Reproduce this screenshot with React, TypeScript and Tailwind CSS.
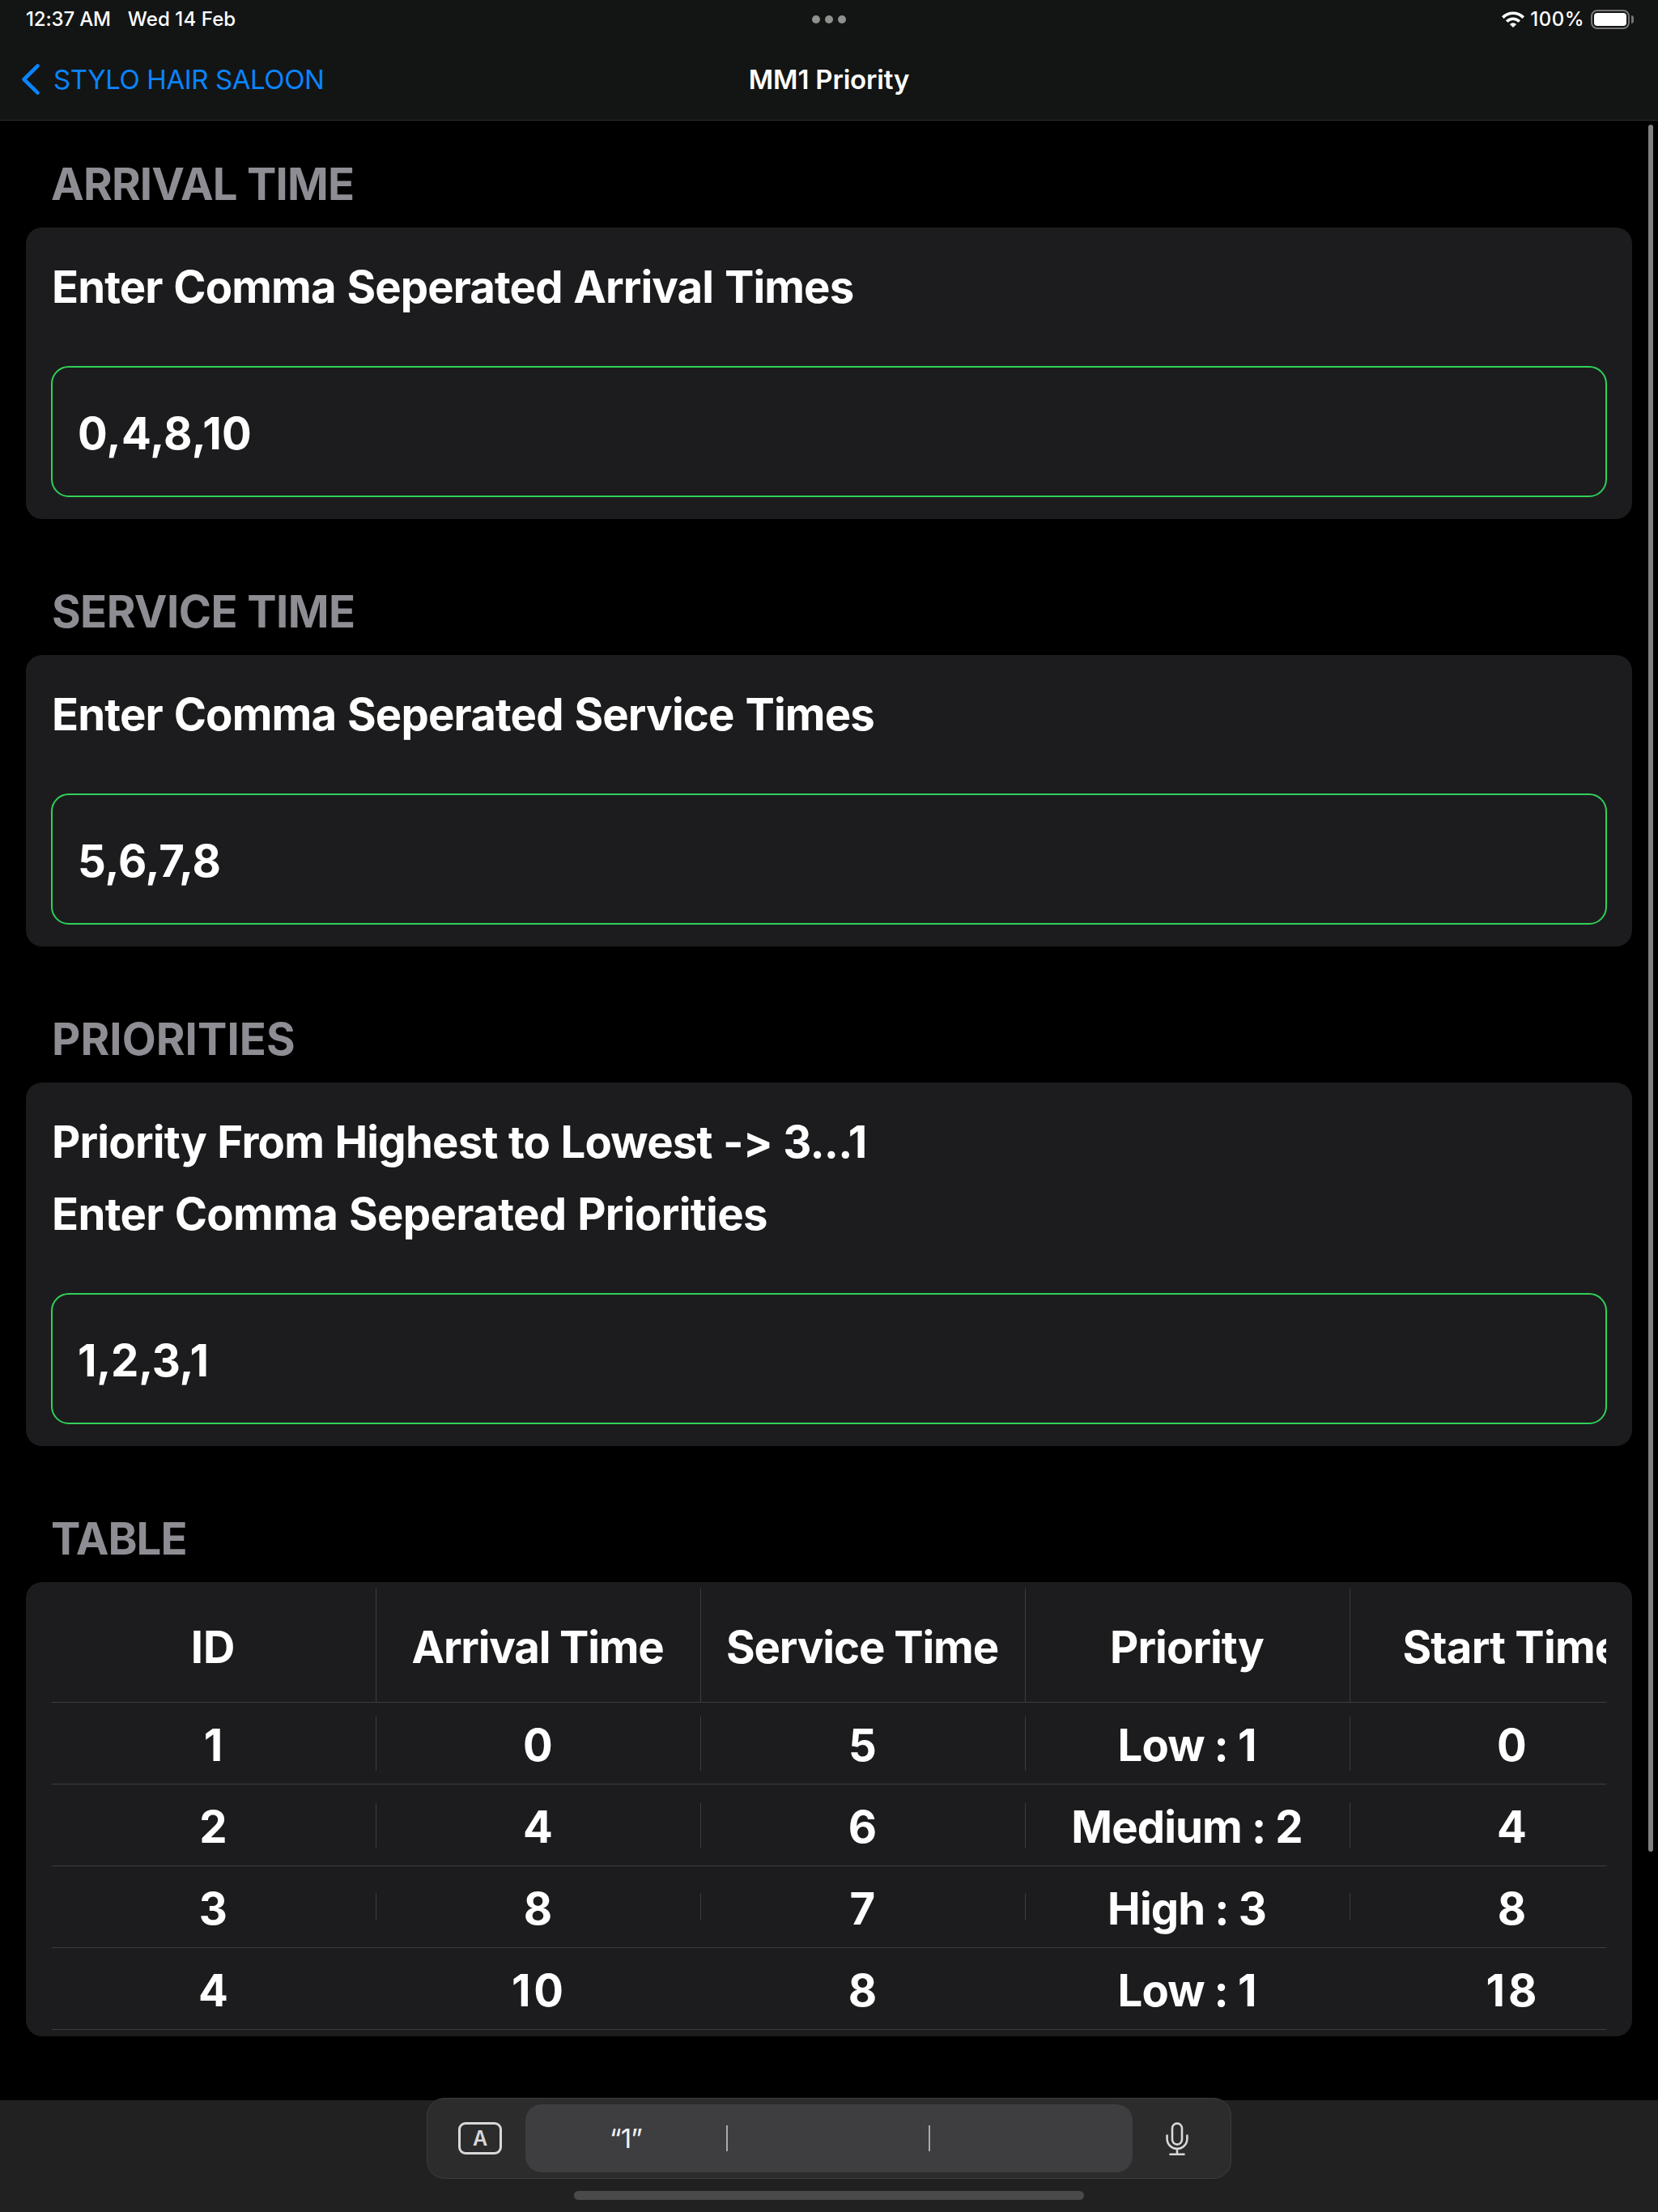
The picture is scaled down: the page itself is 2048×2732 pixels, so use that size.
import React from "react";

type Line = { text: string; className: string };
type Field = { title: string; titleClass: string; lines: Line[]; value: string; valueClass: string };

const fields: Field[] = [
  {
    title: "ARRIVAL TIME",
    titleClass: "tracking-[-0.8px] -ml-px",
    lines: [{ text: "Enter Comma Seperated Arrival Times", className: "tracking-[-0.9px] [word-spacing:1.7px]" }],
    value: "0,4,8,10",
    valueClass: "tracking-[0.27px]",
  },
  {
    title: "SERVICE TIME",
    titleClass: "tracking-[-0.57px]",
    lines: [{ text: "Enter Comma Seperated Service Times", className: "tracking-[-0.85px] [word-spacing:1.7px]" }],
    value: "5,6,7,8",
    valueClass: "tracking-[-0.15px]",
  },
  {
    title: "PRIORITIES",
    titleClass: "tracking-[0.08px]",
    lines: [
      { text: "Priority From Highest to Lowest -> 3...1", className: "tracking-[-0.8px] [word-spacing:1.2px]" },
      { text: "Enter Comma Seperated Priorities", className: "tracking-[-0.65px] [word-spacing:1.5px]" },
    ],
    value: "1,2,3,1",
    valueClass: "tracking-[-0.3px]",
  },
];

const columns = [
  { text: "ID", className: "tracking-normal" },
  { text: "Arrival Time", className: "tracking-[-1.2px]" },
  { text: "Service Time", className: "tracking-[-1.1px]" },
  { text: "Priority", className: "tracking-[-0.95px]" },
  { text: "Start Time", className: "tracking-[-0.8px]" },
];

const rows = [
  { cells: ["1", "0", "5", "Low : 1", "0"], bar: "h-[67px]" },
  { cells: ["2", "4", "6", "Medium : 2", "4"], bar: "h-[55px]" },
  { cells: ["3", "8", "7", "High : 3", "8"], bar: "h-[34px]" },
  { cells: ["4", "10", "8", "Low : 1", "18"], bar: "h-0" },
];

function StatusBar() {
  return (
    <div className="grid h-12 grid-cols-3 items-center pl-8 pr-[30px] text-[24px] font-medium leading-none">
      <div className="flex gap-[21px] whitespace-nowrap">
        <span className="tracking-[-0.17px]">12:37 AM</span>
        <span className="tracking-[0.1px]">Wed 14 Feb</span>
      </div>
      <div className="flex justify-center gap-1.5 pr-0.5">
        <i className="size-2.5 rounded-full bg-[#8f918f]" />
        <i className="size-2.5 rounded-full bg-[#8f918f]" />
        <i className="size-2.5 rounded-full bg-[#8f918f]" />
      </div>
      <div className="flex items-center justify-end">
        <svg width="28" height="20" viewBox="0 0 28 20" fill="none" stroke="#fff" strokeWidth="3.7">
          <path d="M1.3 7.6A17.8 17.8 0 0 1 26.7 7.6" />
          <path d="M6.2 12.5A11 11 0 0 1 21.8 12.5" />
          <path d="M9.9 16A5.8 5.8 0 0 1 18.1 16L14 20Z" fill="#fff" stroke="none" />
        </svg>
        <span className="ml-[7px] tracking-[0.5px]">100%</span>
        <div className="ml-2 h-6 w-12 rounded-[8px] border-2 border-[#757675] p-0.5">
          <div className="h-full rounded-[4px] bg-white" />
        </div>
        <i className="ml-0.5 h-2.5 w-[3px] rounded-r-full bg-[#757675]" />
      </div>
    </div>
  );
}

function NavBar() {
  return (
    <div className="grid h-[100px] grid-cols-3 items-center text-[33px] leading-none">
      <div className="flex items-center whitespace-nowrap pl-[27px] text-[#0a84ff]">
        <svg width="22" height="38" viewBox="0 0 22 38" fill="none" stroke="currentColor" strokeWidth="4.6" strokeLinecap="round" strokeLinejoin="round">
          <path d="M19.5 2.4L2.6 19L19.5 35.6" />
        </svg>
        <span className="ml-[17px] tracking-[-0.41px]">STYLO HAIR SALOON</span>
      </div>
      <div className="text-center font-semibold tracking-[-0.18px]">MM1 Priority</div>
    </div>
  );
}

function SectionTitle({ text, className }: { text: string; className: string }) {
  return (
    <h2 className="h-[66px] pl-8 text-[54.5px] font-bold leading-[66px] text-[#8e8d93]">
      <span className={className}>{text}</span>
    </h2>
  );
}

function FieldSection({ field, first }: { field: Field; first: boolean }) {
  return (
    <section className={first ? "pt-[45px]" : "pt-[81px]"}>
      <SectionTitle text={field.title} className={field.titleClass} />
      <div className="mt-[21px] rounded-[20px] bg-[#1c1c1e] px-[31px] pb-[27px] pt-10">
        <div className="mb-[65px] flex flex-col gap-[23px] pl-px text-[54.5px] font-bold leading-[66px]">
          {field.lines.map((line) => (
            <p key={line.text} className={line.className}>
              {line.text}
            </p>
          ))}
        </div>
        <div className="flex h-[162px] items-center rounded-[22px] border-2 border-[#30d158] pl-[31px] pt-1 text-[54.5px] font-bold leading-none">
          <span className={field.valueClass}>{field.value}</span>
        </div>
      </div>
    </section>
  );
}

function Cell({ text, bar, className = "" }: { text: string; bar: string; className?: string }) {
  return (
    <div className={`flex w-[401px] shrink-0 items-center ${className}`}>
      <span className="grow whitespace-nowrap pr-0.5 pt-1 text-center leading-none">
        {/^\d\d$/.test(text) ? <span className="pl-1 tracking-[4px]">{text}</span> : text}
      </span>
      <i className={`w-px bg-[#3d3d41] ${bar}`} />
    </div>
  );
}

function ResultTable() {
  return (
    <section className="pt-[81px]">
      <SectionTitle text="TABLE" className="-ml-px tracking-[-0.9px]" />
      <div className="mt-[21px] rounded-[20px] bg-[#1c1c1e] px-8 py-2">
        <div className="overflow-hidden text-[54.5px] font-bold">
          <div className="flex h-[141px] border-b border-[#3d3d41]">
            {columns.map((c) => (
              <Cell key={c.text} text={c.text} className={c.className} bar="h-full" />
            ))}
          </div>
          {rows.map((r) => (
            <div key={r.cells[0]} className="flex h-[101px] border-b border-[#3d3d41] tracking-[-0.9px]">
              {r.cells.map((c, i) => (
                <Cell key={i} text={c} bar={r.bar} />
              ))}
            </div>
          ))}
        </div>
      </div>
    </section>
  );
}

function KeyboardBar() {
  return (
    <footer className="mt-auto flex h-[138px] flex-col items-center bg-[#212121]">
      <div className="-mt-[3px] flex h-[100px] w-[994px] shrink-0 items-center rounded-[22px] border border-[#3c3c3c] bg-[#2c2c2c]">
        <div className="flex w-[121px] justify-center pl-[9px]">
          <span className="flex h-10 w-[54px] items-center justify-center rounded-[9px] border-[3px] border-[#d8d8d8] text-[25px] font-semibold leading-none text-[#d8d8d8]">
            A
          </span>
        </div>
        <div className="flex h-[84px] w-[750px] items-center rounded-[20px] bg-[#3e3e40] text-[33px] text-[#f0f0f0]">
          <span className="w-[248px] text-center leading-none tracking-[-0.8px]">“1”</span>
          <i className="h-8 w-0.5 bg-[#a9a9b2]" />
          <span className="w-[248px]" />
          <i className="h-8 w-0.5 bg-[#a9a9b2]" />
        </div>
        <div className="flex w-[121px] justify-center pr-3 pt-0.5">
          <svg width="28" height="42" viewBox="0 0 28 42" fill="none" stroke="#d8d8d8" strokeWidth="2.6" strokeLinecap="round">
            <rect x="8" y="1.6" width="12" height="26" rx="6" />
            <path d="M1.6 16.5V20.5A12.4 12.4 0 0 0 26.4 20.5V16.5M14 33.5V39.5M5.5 39.8H22.5" />
          </svg>
        </div>
      </div>
      <div className="mt-[15px] h-[11px] w-[630px] rounded-full bg-[#4a4a4a]" />
    </footer>
  );
}

export default function App() {
  return (
    <div className="relative flex h-[2732px] w-[2048px] flex-col overflow-hidden bg-black font-[Inter,sans-serif] text-white [font-feature-settings:'calt'_0]">
      <header className="h-[149px] shrink-0 border-b border-[#2b2c2b] bg-[#131514]">
        <StatusBar />
        <NavBar />
      </header>
      <main className="px-8">
        {fields.map((f, i) => (
          <FieldSection key={f.title} field={f} first={i === 0} />
        ))}
        <ResultTable />
      </main>
      <KeyboardBar />
      <div className="absolute right-1.5 top-[154px] h-[2133px] w-1.5 rounded-full bg-[#808080]" />
    </div>
  );
}
